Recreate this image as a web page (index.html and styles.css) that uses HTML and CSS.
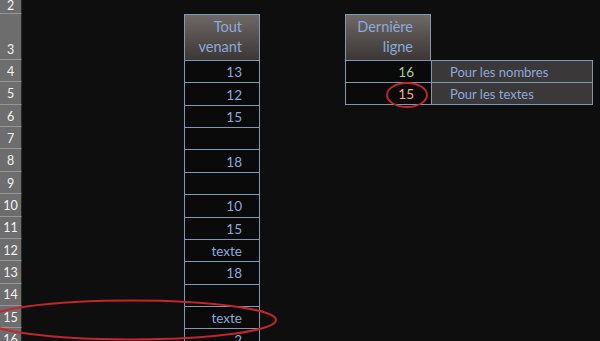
FILE: index.html
```html
<!DOCTYPE html>
<html lang="fr">
<head>
    <meta charset="UTF-8">
    <meta name="viewport" content="width=device-width, initial-scale=1.0">
    <title>Dernière ligne</title>
    <link rel="stylesheet" href="styles.css">
</head>
<body>
    <div class="sheet">
        <!-- en-têtes de lignes -->
        <div class="rh" style="grid-row: 1">2</div>
        <div class="rh" style="grid-row: 2">3</div>
        <div class="rh" style="grid-row: 3">4</div>
        <div class="rh" style="grid-row: 4">5</div>
        <div class="rh" style="grid-row: 5">6</div>
        <div class="rh" style="grid-row: 6">7</div>
        <div class="rh" style="grid-row: 7">8</div>
        <div class="rh" style="grid-row: 8">9</div>
        <div class="rh" style="grid-row: 9">10</div>
        <div class="rh" style="grid-row: 10">11</div>
        <div class="rh" style="grid-row: 11">12</div>
        <div class="rh" style="grid-row: 12">13</div>
        <div class="rh" style="grid-row: 13">14</div>
        <div class="rh" style="grid-row: 14">15</div>
        <div class="rh" style="grid-row: 15">16</div>

        <!-- colonne Tout venant -->
        <div class="head tv" style="grid-row: 2">Tout<br>venant</div>
        <div class="cell tv" style="grid-row: 3">13</div>
        <div class="cell tv" style="grid-row: 4">12</div>
        <div class="cell tv" style="grid-row: 5">15</div>
        <div class="cell tv" style="grid-row: 6"></div>
        <div class="cell tv" style="grid-row: 7">18</div>
        <div class="cell tv" style="grid-row: 8"></div>
        <div class="cell tv" style="grid-row: 9">10</div>
        <div class="cell tv" style="grid-row: 10">15</div>
        <div class="cell tv" style="grid-row: 11">texte</div>
        <div class="cell tv" style="grid-row: 12">18</div>
        <div class="cell tv" style="grid-row: 13"></div>
        <div class="cell tv" style="grid-row: 14">texte</div>
        <div class="cell tv" style="grid-row: 15">2</div>

        <!-- résultats -->
        <div class="head dl" style="grid-row: 2">Dernière<br>ligne</div>
        <div class="cell dl num" style="grid-row: 3">16</div>
        <div class="cell dl txt last" style="grid-row: 4">15</div>
        <div class="note" style="grid-row: 3">Pour les nombres</div>
        <div class="note last" style="grid-row: 4">Pour les textes</div>
    </div>

    <svg class="marks" width="600" height="341" viewBox="0 0 600 341">
        <ellipse cx="407" cy="95" rx="20" ry="12" />
        <ellipse cx="131" cy="320" rx="145" ry="19.5" />
    </svg>
</body>
</html>
```

FILE: styles.css
```css
body {
    margin: 0;
    background: #0e0e0e;
    font-family: Lato, "Open Sans", sans-serif;
    overflow: hidden;
}
.sheet {
    display: grid;
    grid-template-columns: 22px 162px 76px 85px 86px 162px 1fr;
    grid-template-rows: 14px 46px repeat(13, 22.36px);
    height: 341px;
    overflow: hidden;
}
.rh {
    grid-column: 1;
    display: flex;
    align-items: flex-end;
    justify-content: center;
    padding-bottom: 3px;
    box-sizing: border-box;
    background: #6d6d6d;
    border-bottom: 1px solid #959595;
    border-right: 1px solid #2a2a2a;
    color: #f4f4f4;
    font-size: 12.5px;
    line-height: 1;
}
.rh:first-child {
    padding-bottom: 1px;
}
.head {
    display: flex;
    align-items: flex-end;
    justify-content: flex-end;
    text-align: right;
    box-sizing: border-box;
    padding: 0 17px 3px 0;
    border: 1px solid #8497b0;
    border-bottom: none;
    background: linear-gradient(#6e6866, #3b3735);
    color: #8ea9db;
    font-size: 14.5px;
    line-height: 20px;
}
.cell {
    display: flex;
    align-items: center;
    justify-content: flex-end;
    box-sizing: border-box;
    padding: 1px 17px 0 0;
    border-top: 1px solid #8497b0;
    border-left: 1px solid #8497b0;
    background: #0a0a0a;
    color: #8ea9db;
    font-size: 13.5px;
}
.tv {
    grid-column: 3;
    border-right: 1px solid #8497b0;
}
.dl {
    grid-column: 5;
}
.num {
    color: #a9d08e;
}
.txt {
    color: #f4b084;
}
.note {
    grid-column: 6;
    display: flex;
    align-items: center;
    box-sizing: border-box;
    padding: 1px 0 0 18px;
    border: 1px solid #8497b0;
    border-bottom: none;
    background: #3a3838;
    color: #8ea9db;
    font-size: 13px;
}
.last {
    border-bottom: 1px solid #8497b0;
}
.marks {
    position: absolute;
    top: 0;
    left: 0;
    pointer-events: none;
}
.marks ellipse {
    fill: none;
    stroke: #c0262c;
    stroke-width: 2;
}
```
